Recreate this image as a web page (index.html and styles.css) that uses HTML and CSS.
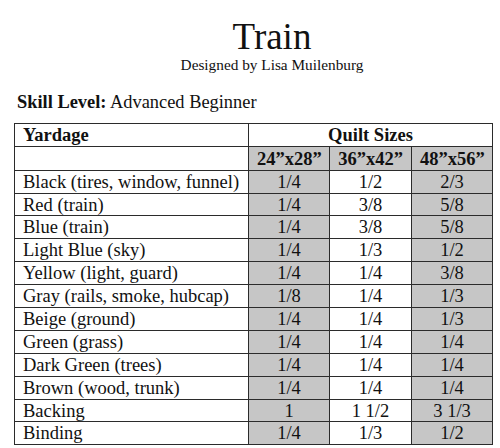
FILE: index.html
```html
<!DOCTYPE html>
<html>
<head>
<meta charset="utf-8">
<link rel="stylesheet" href="styles.css">
</head>
<body>
<div class="page">
  <header class="head">
    <h1 class="title">Train</h1>
    <p class="byline">Designed by Lisa Muilenburg</p>
  </header>
  <p class="skill"><b>Skill Level:</b> Advanced Beginner</p>
  <table class="yard">
    <colgroup>
      <col class="c-name"><col class="c-size"><col class="c-size2"><col class="c-size">
    </colgroup>
    <tr class="hrow">
      <th class="left">Yardage</th>
      <th colspan="3">Quilt Sizes</th>
    </tr>
    <tr class="hrow">
      <th></th>
      <th class="g">24”x28”</th>
      <th class="g">36”x42”</th>
      <th class="g">48”x56”</th>
    </tr>
    <tr><td class="left">Black (tires, window, funnel)</td><td class="g">1/4</td><td>1/2</td><td class="g">2/3</td></tr>
    <tr><td class="left">Red (train)</td><td class="g">1/4</td><td>3/8</td><td class="g">5/8</td></tr>
    <tr><td class="left">Blue (train)</td><td class="g">1/4</td><td>3/8</td><td class="g">5/8</td></tr>
    <tr><td class="left">Light Blue (sky)</td><td class="g">1/4</td><td>1/3</td><td class="g">1/2</td></tr>
    <tr><td class="left">Yellow (light, guard)</td><td class="g">1/4</td><td>1/4</td><td class="g">3/8</td></tr>
    <tr><td class="left">Gray (rails, smoke, hubcap)</td><td class="g">1/8</td><td>1/4</td><td class="g">1/3</td></tr>
    <tr><td class="left">Beige (ground)</td><td class="g">1/4</td><td>1/4</td><td class="g">1/3</td></tr>
    <tr><td class="left">Green (grass)</td><td class="g">1/4</td><td>1/4</td><td class="g">1/4</td></tr>
    <tr><td class="left">Dark Green (trees)</td><td class="g">1/4</td><td>1/4</td><td class="g">1/4</td></tr>
    <tr><td class="left">Brown (wood, trunk)</td><td class="g">1/4</td><td>1/4</td><td class="g">1/4</td></tr>
    <tr><td class="left">Backing</td><td class="g">1</td><td>1 1/2</td><td class="g">3 1/3</td></tr>
    <tr><td class="left">Binding</td><td class="g">1/4</td><td>1/3</td><td class="g">1/2</td></tr>
  </table>
</div>
</body>
</html>
```
FILE: styles.css
```css
html, body {
  margin: 0;
  padding: 0;
  background: #fff;
}
body {
  font-family: "Liberation Serif", "Times New Roman", serif;
  color: #111;
  width: 500px;
  height: 448px;
  overflow: hidden;
}
.page {
  padding-top: 18px;
}
.head {
  margin-left: 44px;
  text-align: center;
}
.title {
  margin: 0;
  font-size: 37px;
  line-height: 37px;
  font-weight: normal;
}
.byline {
  margin: 2px 0 0 0;
  font-size: 15.3px;
  line-height: 15.3px;
}
.skill {
  margin: 21px 0 0 17px;
  font-size: 18.4px;
  line-height: 18px;
}
.yard {
  margin: 12px 0 0 14px;
  border-collapse: collapse;
  table-layout: fixed;
  width: 478px;
  font-size: 18.5px;
}
.c-name { width: 234px; }
.c-size { width: 81px; }
.c-size2 { width: 82px; }
.yard th, .yard td {
  border: 1px solid #2b2b2b;
  padding: 0 8px;
  height: 22.9px;
  line-height: 20px;
  text-align: center;
  vertical-align: middle;
  white-space: nowrap;
  box-sizing: border-box;
}
.yard th {
  font-weight: bold;
}
.hrow th {
  height: 23.2px;
}
.yard .left {
  text-align: left;
}
.yard .g {
  background: #c6c6c6;
}
```
